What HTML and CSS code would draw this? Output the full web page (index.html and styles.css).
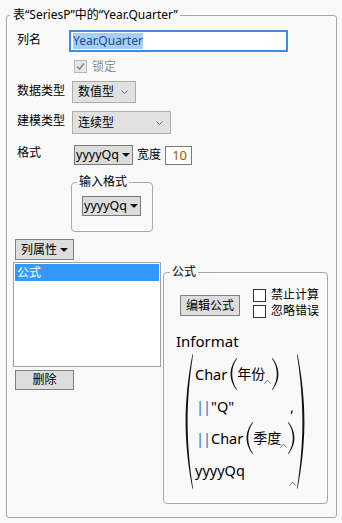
FILE: index.html
```html
<!doctype html>
<html lang="zh">
<head>
    <meta charset="UTF-8" />
    <title>列信息</title>
    <link rel="stylesheet" href="styles.css">
</head>
<body>
<fieldset class="panel">
    <legend>表“SeriesP”中的“Year.Quarter”</legend>

    <div class="row row-name">
        <span class="lbl">列名</span>
        <div class="text-field"><span class="sel">Year.Quarter</span></div>
    </div>

    <div class="row row-lock">
        <span class="check check-off">
            <svg width="11" height="11" viewBox="0 0 11 11"><path d="M2 5.5 L4.5 8 L9 2.5" fill="none" stroke="#8a8a8a" stroke-width="1.6"/></svg>
        </span>
        <span class="lock-text">锁定</span>
    </div>

    <div class="row row-type">
        <span class="lbl">数据类型</span>
        <div class="combo combo-type">
            <span>数值型</span>
            <svg class="chev" width="7" height="4" viewBox="0 0 7 4"><path d="M0.5 0.5 L3.5 3.5 L6.5 0.5" fill="none" stroke="#666" stroke-width="1"/></svg>
        </div>
    </div>

    <div class="row row-model">
        <span class="lbl">建模类型</span>
        <div class="combo combo-model">
            <span>连续型</span>
            <svg class="chev" width="7" height="4" viewBox="0 0 7 4"><path d="M0.5 0.5 L3.5 3.5 L6.5 0.5" fill="none" stroke="#666" stroke-width="1"/></svg>
        </div>
    </div>

    <div class="row row-format">
        <span class="lbl lbl-fmt">格式</span>
        <div class="pick">
            <span>yyyyQq</span>
            <svg class="tri" width="8" height="4" viewBox="0 0 8 4"><path d="M0 0 H8 L4 4 Z" fill="#111"/></svg>
        </div>
        <span class="width-lbl">宽度</span>
        <div class="num-field">10</div>
    </div>

    <fieldset class="group-input">
        <legend>输入格式</legend>
        <div class="pick">
            <span>yyyyQq</span>
            <svg class="tri" width="8" height="4" viewBox="0 0 8 4"><path d="M0 0 H8 L4 4 Z" fill="#111"/></svg>
        </div>
    </fieldset>

    <div class="btn btn-props">
        <span>列属性</span>
        <svg class="tri" width="8" height="4" viewBox="0 0 8 4"><path d="M0 0 H8 L4 4 Z" fill="#111"/></svg>
    </div>

    <div class="bottom">
        <div class="left-col">
            <div class="listbox">
                <div class="item item-on">公式</div>
            </div>
            <div class="btn btn-del">删除</div>
        </div>

        <fieldset class="group-formula">
            <legend>公式</legend>
            <div class="formula-top">
                <div class="btn btn-edit">编辑公式</div>
                <div class="checks">
                    <div class="check-row"><span class="check"></span><span>禁止计算</span></div>
                    <div class="check-row"><span class="check"></span><span>忽略错误</span></div>
                </div>
            </div>

            <div class="fn-name">Informat</div>
            <div class="formula">
                <svg class="paren-big" width="8" height="135" viewBox="0 0 8 135"><path d="M7.5 0 C2.5 25 0.6 48 0.6 67.5 C0.6 87 2.5 110 7.5 135 L8 134 C4.2 110 2.6 87 2.6 67.5 C2.6 48 4.2 25 8 1 Z" fill="#111"/></svg>
                <div class="args">
                    <div class="arg">
                        <span class="word">Char</span>
                        <svg class="paren" width="7" height="32" viewBox="0 0 7 32"><path d="M6.5 0 C2 6 0.6 11 0.6 16 C0.6 21 2 26 6.5 32 L7 31.4 C3.4 26 2.2 21 2.2 16 C2.2 11 3.4 6 7 0.6 Z" fill="#111"/></svg>
                        <span class="cjk">年份</span><svg class="caret" width="7" height="5" viewBox="0 0 7 5"><path d="M0.5 4.5 L3.5 1 L6.5 4.5" fill="none" stroke="#777" stroke-width="1"/></svg>
                        <svg class="paren" width="7" height="32" viewBox="0 0 7 32"><path d="M0.5 0 C5 6 6.4 11 6.4 16 C6.4 21 5 26 0.5 32 L0 31.4 C3.6 26 4.8 21 4.8 16 C4.8 11 3.6 6 0 0.6 Z" fill="#111"/></svg>
                    </div>
                    <div class="arg">
                        <span class="bars">||</span><span class="word">"Q"</span>
                        <span class="comma">,</span>
                    </div>
                    <div class="arg">
                        <span class="bars">||</span><span class="word">Char</span>
                        <svg class="paren" width="7" height="32" viewBox="0 0 7 32"><path d="M6.5 0 C2 6 0.6 11 0.6 16 C0.6 21 2 26 6.5 32 L7 31.4 C3.4 26 2.2 21 2.2 16 C2.2 11 3.4 6 7 0.6 Z" fill="#111"/></svg>
                        <span class="cjk">季度</span><svg class="caret" width="7" height="5" viewBox="0 0 7 5"><path d="M0.5 4.5 L3.5 1 L6.5 4.5" fill="none" stroke="#777" stroke-width="1"/></svg>
                        <svg class="paren" width="7" height="32" viewBox="0 0 7 32"><path d="M0.5 0 C5 6 6.4 11 6.4 16 C6.4 21 5 26 0.5 32 L0 31.4 C3.6 26 4.8 21 4.8 16 C4.8 11 3.6 6 0 0.6 Z" fill="#111"/></svg>
                    </div>
                    <div class="arg">
                        <span class="word">yyyyQq</span>
                        <svg class="caret caret-end" width="7" height="5" viewBox="0 0 7 5"><path d="M0.5 4.5 L3.5 1 L6.5 4.5" fill="none" stroke="#777" stroke-width="1"/></svg>
                    </div>
                </div>
                <svg class="paren-big" width="8" height="135" viewBox="0 0 8 135"><path d="M0.5 0 C5.5 25 7.4 48 7.4 67.5 C7.4 87 5.5 110 0.5 135 L0 134 C3.8 110 5.4 87 5.4 67.5 C5.4 48 3.8 25 0 1 Z" fill="#111"/></svg>
            </div>
        </fieldset>
    </div>
</fieldset>
</body>
</html>
```

FILE: styles.css
```css
*{
    box-sizing: border-box;
}
body{
    margin: 0;
    padding-top: 7px;
    background: #f9f9f9;
    color: #000;
    font: 12px/16px "Noto Sans", "Noto Sans CJK SC", sans-serif;
}
fieldset{
    margin: 0;
    min-width: 0;
    border: 1px solid #a8a8a8;
    border-radius: 3px;
}
legend{
    line-height: 16px;
}
.panel{
    margin-left: 6px;
    width: 331px;
    height: 511px;
    padding: 7px 6px 0 7px;
}
.panel > legend{
    margin-left: -4px;
    padding: 0 2px 0 3px;
}
.row{
    display: flex;
    align-items: flex-start;
}
.lbl{
    width: 52px;
    margin-left: 3px;
    padding-top: 2px;
    flex-shrink: 0;
}
.text-field{
    width: 219px;
    height: 22px;
    border: 2px solid #3c8ee0;
    background: #fff;
    padding: 1px 2px;
}
.sel{
    display: inline-block;
    background: #a6cff7;
    color: #1e4b88;
    line-height: 16px;
}
.row-lock{
    margin-top: 8px;
    padding-left: 60px;
    align-items: center;
    height: 13px;
}
.check{
    width: 13px;
    height: 13px;
    border: 1px solid #333;
    background: #fff;
    flex-shrink: 0;
}
.check-off{
    border-color: #b8b8b8;
    background: #e6e6e6;
}
.check-off svg{
    display: block;
}
.lock-text{
    margin-left: 5px;
    color: #8c8c8c;
    line-height: 13px;
}
.row-type{
    margin-top: 8px;
}
.row-model{
    margin-top: 8px;
}
.combo{
    margin-left: 3px;
    height: 22px;
    display: flex;
    align-items: center;
    justify-content: space-between;
    padding: 0 7px 0 5px;
    background: #e1e1e1;
    border: 1px solid #adadad;
}
.combo-type{
    width: 64px;
}
.combo-model{
    width: 99px;
    height: 23px;
}
.row-format{
    margin-top: 11px;
    align-items: center;
}
.lbl-fmt{
    padding-top: 0;
    align-self: flex-start;
}
.pick{
    width: 59px;
    height: 20px;
    display: flex;
    align-items: center;
    justify-content: space-between;
    padding: 0 2px 0 1px;
    background: #dcdcdc;
    border: 1px solid #7a7a7a;
    font-size: 12.5px;
}
.row-format .pick{
    margin-left: 5px;
}
.width-lbl{
    margin-left: 4px;
    width: 24px;
}
.num-field{
    margin-left: 4px;
    width: 27px;
    height: 19px;
    border: 1px solid #7a7a7a;
    background: #fff;
    color: #9a5a00;
    text-align: right;
    padding-right: 4px;
    font-size: 13px;
    line-height: 16px;
}
.group-input{
    margin: 9px 0 0 57px;
    width: 82px;
    height: 58px;
    padding: 6px 0 0 10px;
    border-radius: 4px;
}
.group-input legend{
    margin-left: -5px;
    padding: 0 2px;
}
.btn{
    background: #dddddd;
    border: 1px solid #808080;
    display: flex;
    align-items: center;
    justify-content: center;
}
.btn-props{
    margin: 7px 0 0 1px;
    width: 59px;
    height: 21px;
    justify-content: space-between;
    padding: 0 5px 0 5px;
}
.bottom{
    margin-top: 2px;
    display: flex;
    align-items: flex-start;
}
.left-col{
    margin-left: -1px;
    width: 148px;
}
.listbox{
    height: 105px;
    border: 1px solid #a0a0a0;
    background: #fff;
    padding: 1px;
}
.item{
    height: 17px;
    padding-left: 2px;
    line-height: 17px;
}
.item-on{
    background: #3399ff;
    color: #fff;
}
.btn-del{
    margin: 3px 0 0 2px;
    width: 59px;
    height: 20px;
}
.group-formula{
    margin: 2px 0 0 2px;
    width: 165px;
    height: 240px;
    padding: 0 0 0 12px;
    border-radius: 4px;
}
.group-formula legend{
    margin-left: -6px;
    padding: 0 2px;
}
.formula-top{
    display: flex;
    align-items: flex-start;
}
.btn-edit{
    margin: 15px 0 0 4px;
    width: 60px;
    height: 21px;
}
.checks{
    margin: 7px 0 0 13px;
}
.check-row{
    display: flex;
    align-items: center;
    height: 16px;
    white-space: nowrap;
}
.check-row span + span{
    margin-left: 5px;
}
.fn-name{
    margin-top: 12px;
    font-size: 15px;
    line-height: 20px;
}
.formula{
    margin: 3px 0 0 9px;
    display: flex;
    align-items: flex-start;
}
.paren-big{
    display: block;
    flex-shrink: 0;
}
.args{
    width: 104px;
    flex-shrink: 0;
    padding: 4px 0 0 2px;
}
.arg{
    height: 32px;
    display: flex;
    align-items: center;
    white-space: nowrap;
    font-size: 14.5px;
}
.arg > *{
    flex-shrink: 0;
}
.word{
    margin-right: 3px;
}
.cjk{
    font-size: 14px;
}
.caret{
    align-self: flex-end;
    margin: 0 1px 6px -1px;
}
.caret-end{
    margin-left: auto;
    margin-right: 1px;
    margin-bottom: 0;
}
.bars{
    color: #2a73c9;
    margin: 0 1px 0 1px;
    letter-spacing: -1px;
}
.comma{
    margin-left: auto;
    margin-right: 3px;
}
.paren{
    display: block;
}
```
